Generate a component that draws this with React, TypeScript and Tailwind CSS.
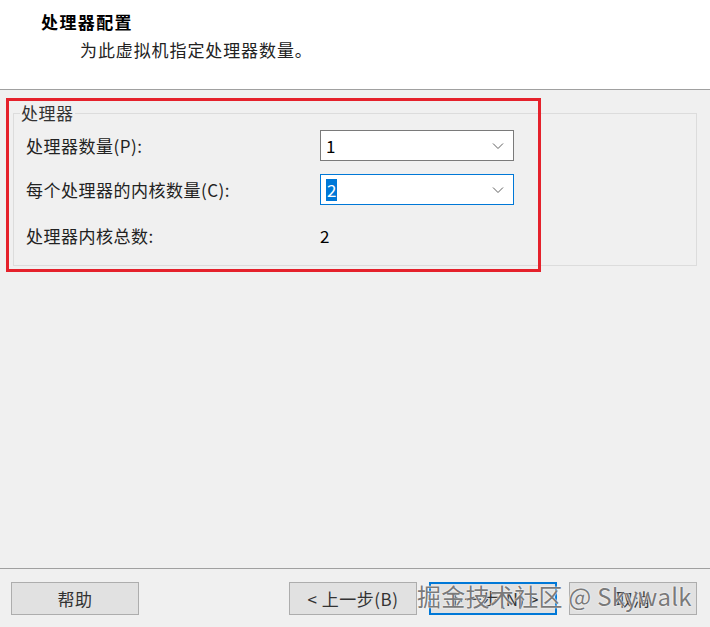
/**
 * New VM wizard: processor configuration page.
 */

const font = { fontFamily: '"Noto Sans CJK SC", "Noto Sans", sans-serif' };

function Chevron() {
  return (
    <svg className="w-[12px] h-[8px]" viewBox="0 0 12 8" fill="none">
      <path d="M1 1.5l5 5 5-5" stroke="#606060" strokeWidth="1" />
    </svg>
  );
}

function Combo({ value, focused }: { value: string; focused?: boolean }) {
  return (
    <div
      className={`w-[194px] h-[31px] bg-white border flex items-center justify-between pl-[5px] pr-[9px] text-[17px] text-black ${
        focused ? 'border-[#0078d7]' : 'border-[#7a7a7a]'
      }`}
    >
      {focused ? (
        <span className="bg-[#0078d7] text-white leading-[22px] px-px">{value}</span>
      ) : (
        <span className="leading-[22px]">{value}</span>
      )}
      <Chevron />
    </div>
  );
}

function Button({ label, primary }: { label: string; primary?: boolean }) {
  return (
    <div
      className={`w-[128px] h-[33px] bg-[#e1e1e1] flex items-center justify-center text-[17px] tracking-[0.5px] text-[#333] ${
        primary ? 'border-2 border-[#0078d7]' : 'border border-[#adadad]'
      }`}
    >
      {label}
    </div>
  );
}

export default function App() {
  return (
    <div className="w-[710px] h-[627px] bg-[#f0f0f0] flex flex-col relative overflow-hidden" style={font}>
      {/* Header */}
      <div className="h-[90px] bg-white border-b border-[#a0a0a0] shrink-0 pl-[41px] pt-[10px]">
        <div className="text-[17px] font-bold text-black leading-[24px] tracking-[1.4px]">处理器配置</div>
        <div className="text-[17px] text-[#222] leading-[24px] pl-[39px] mt-[4px] tracking-[0.9px]">
          为此虚拟机指定处理器数量。
        </div>
      </div>

      {/* Group box */}
      <div className="mx-[13px] mt-[23px] h-[153px] border border-[#dcdcdc] relative pl-[12px] pt-[16px]">
        <span className="absolute left-[6px] top-[-13px] px-px bg-[#f0f0f0] text-[17px] text-[#333] leading-[24px] tracking-[0.5px]">
          处理器
        </span>
        <div className="flex items-center h-[31px]">
          <span className="w-[294px] text-[17px] text-[#222] tracking-[0.5px]">处理器数量(P):</span>
          <Combo value="1" />
        </div>
        <div className="flex items-center h-[31px] mt-[13px]">
          <span className="w-[294px] text-[17px] text-[#222] tracking-[0.5px]">每个处理器的内核数量(C):</span>
          <Combo value="2" focused />
        </div>
        <div className="flex items-center h-[31px] mt-[15px]">
          <span className="w-[294px] text-[17px] text-[#222] tracking-[0.5px]">处理器内核总数:</span>
          <span className="text-[17px] text-black">2</span>
        </div>
      </div>

      {/* Red highlight annotation */}
      <div className="absolute left-[6px] top-[98px] w-[535px] h-[174px] border-[3px] border-[#e5212b]" />

      <div className="flex-1" />

      {/* Footer */}
      <div className="border-t border-[#a0a0a0] h-[59px] shrink-0 flex items-start pt-[13px] pl-[11px] pr-[13px]">
        <Button label="帮助" />
        <div className="flex-1" />
        <div className="flex gap-[12px]">
          <Button label="< 上一步(B)" />
          <Button label="下一步(N) >" primary />
          <Button label="取消" />
        </div>
      </div>

      {/* Watermark */}
      <div
        className="absolute left-[417px] top-[580px] text-[24px] leading-[32px] tracking-[0.3px] text-[#7a7a7a] whitespace-nowrap pointer-events-none"
        style={{ textShadow: '0 0 2px #fff, 0 0 1px #fff' }}
      >
        掘金技术社区 @ Skywalk
      </div>
    </div>
  );
}
